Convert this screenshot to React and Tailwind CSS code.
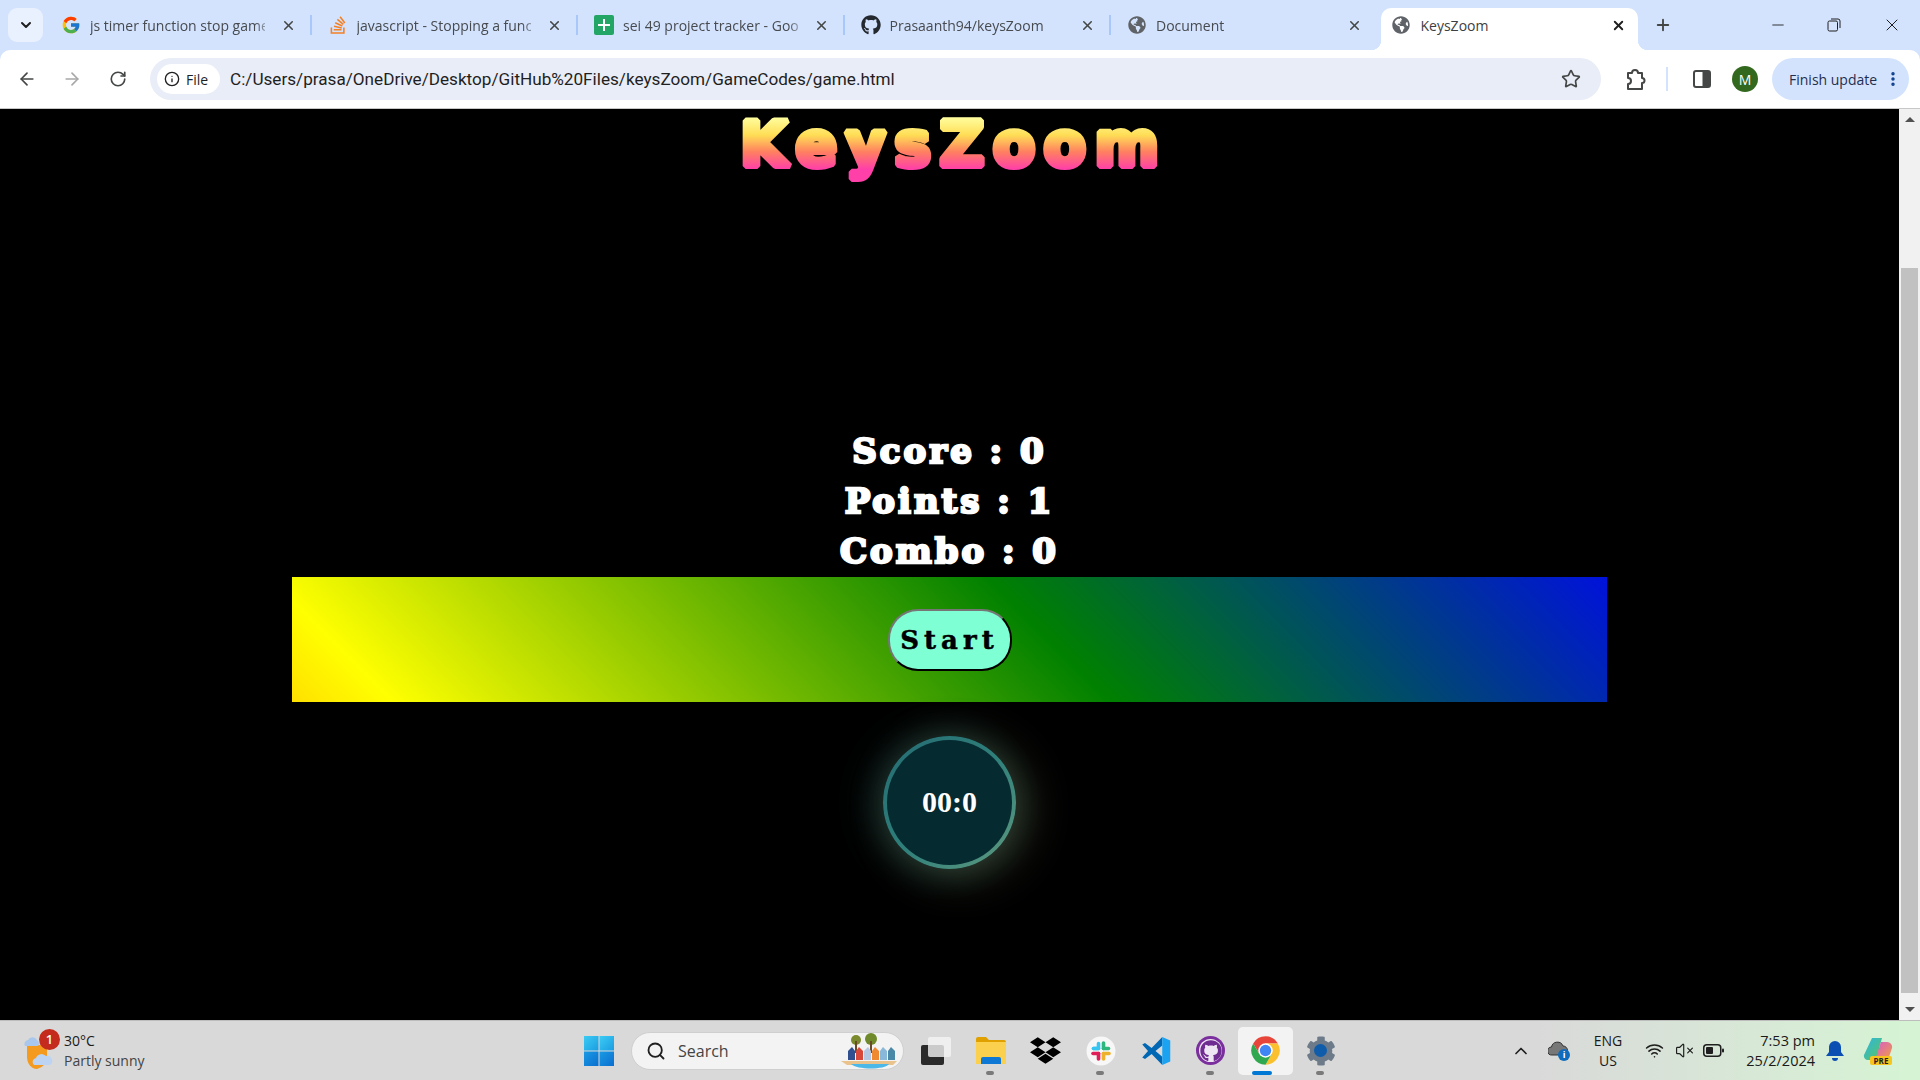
import React from "react";
import { ChevronDown, ChevronUp, X, Plus, Minus, ArrowLeft, ArrowRight, RotateCw, Info, Star, Search, Wifi, VolumeX, MoreVertical } from "lucide-react";
import { FcGoogle } from "react-icons/fc";
import { FaStackOverflow, FaGithub, FaGlobeAmericas, FaDropbox, FaCog } from "react-icons/fa";

const uiFont = "font-['Open_Sans','Noto_Sans',sans-serif]";

const SheetsIcon = () => (
  <div className="w-[20px] h-[20px] rounded-[2px] bg-[#23a566] flex items-center justify-center relative">
    <div className="w-[12px] h-[2px] bg-white" />
    <div className="absolute w-[2px] h-[12px] bg-white" />
  </div>
);

const tabs = [
  { title: "js timer function stop game when time ends", icon: <FcGoogle size={20} /> },
  { title: "javascript - Stopping a function in JS", icon: <FaStackOverflow size={20} className="text-[#f48024]" /> },
  { title: "sei 49 project tracker - Google Sheets", icon: <SheetsIcon /> },
  { title: "Prasaanth94/keysZoom", icon: <FaGithub size={20} className="text-[#24292f]" /> },
  { title: "Document", icon: <FaGlobeAmericas size={18} className="text-[#5f6368]" /> },
];

function Tab({ title, icon, last }) {
  return (
    <div className="w-[266.5px] h-[50px] pb-[8px] flex items-end shrink-0">
      <div className="w-full h-[34px] flex items-center pl-[16px] pr-[16px] relative">
        <div className="w-[20px] flex justify-center shrink-0">{icon}</div>
        <div className="ml-[9px] w-[183px] overflow-hidden whitespace-nowrap text-[14px] text-[#474a4f] [mask-image:linear-gradient(to_right,black_165px,transparent_183px)]">
          {title}
        </div>
        <X size={15} strokeWidth={2.5} className="ml-[16px] text-[#444746] shrink-0" />
        {!last && <div className="absolute right-0 top-[7px] w-[2px] h-[20px] bg-[#a8c7fa]" />}
      </div>
    </div>
  );
}

const RestoreIcon = () => (
  <svg width="14" height="14" viewBox="0 0 14 14" fill="none" stroke="#1f1f1f" strokeWidth="1">
    <rect x="1" y="3" width="9.5" height="10" rx="1.5" />
    <path d="M4 1h7a2 2 0 0 1 2 2v7" />
  </svg>
);

const ExtensionIcon = () => (
  <svg width="22" height="24" viewBox="0 0 22 24" fill="none" stroke="#444746" strokeWidth="2" strokeLinejoin="round">
    <path d="M4 6h4a3 3 0 0 1 6 0h4v5a2.5 2.5 0 0 1 0 5v6H4v-5a3 3 0 0 0 0-6z" />
  </svg>
);

const SidePanelIcon = () => (
  <svg width="18" height="18" viewBox="0 0 18 18">
    <rect x="1" y="1" width="16" height="16" rx="2" fill="none" stroke="#444746" strokeWidth="2" />
    <rect x="9.5" y="1" width="7.5" height="16" fill="#444746" />
  </svg>
);

const WeatherIcon = () => (
  <svg width="34" height="40" viewBox="0 0 34 40">
    <path d="M4 14h20v12a12 12 0 0 1-10 12C8 38 4 32 4 26z" fill="#f39a1f" />
    <path d="M2 15a4 4 0 0 1 3-6 5 5 0 0 1 9 0 4 4 0 0 1 1 6z" fill="#a9c6ec" />
    <path d="M11 34a4 4 0 0 1 2-7 6 6 0 0 1 10-2 5 5 0 0 1 4 9z" fill="#bcd4f2" />
  </svg>
);

const WindowsLogo = () => (
  <svg width="30" height="30" viewBox="0 0 30 30">
    <defs>
      <linearGradient id="winTop" x1="0" y1="0" x2="1" y2="1">
        <stop offset="0" stopColor="#3ccbf4" />
        <stop offset="1" stopColor="#1b9de2" />
      </linearGradient>
      <linearGradient id="winBottom" x1="0" y1="0" x2="1" y2="1">
        <stop offset="0" stopColor="#1a9ae3" />
        <stop offset="1" stopColor="#0a6fd0" />
      </linearGradient>
    </defs>
    <rect x="0" y="0" width="14.5" height="14.5" fill="url(#winTop)" />
    <rect x="15.5" y="0" width="14.5" height="14.5" fill="url(#winTop)" />
    <rect x="0" y="15.5" width="14.5" height="14.5" fill="url(#winBottom)" />
    <rect x="15.5" y="15.5" width="14.5" height="14.5" fill="url(#winBottom)" />
  </svg>
);

const BeachArt = () => (
  <svg width="60" height="36" viewBox="0 0 58 36">
    <circle cx="15" cy="7" r="5" fill="#7a8a2c" />
    <circle cx="30" cy="6" r="6" fill="#6f8a2a" />
    <rect x="14" y="8" width="2" height="12" fill="#6b4a2a" />
    <rect x="29" y="8" width="2" height="12" fill="#6b4a2a" />
    <path d="M0 28h56l-4 4H6z" fill="#e9c28c" />
    <path d="M10 31h38c-4 6-32 6-38 0z" fill="#4bb8e8" />
    <path d="M7 27v-9l4-4 3 4v9z" fill="#2f4f8f" />
    <path d="M15 27v-9l3-4 4 4v9z" fill="#d8483a" />
    <path d="M23 27v-9l4-4 3 4v9z" fill="#b4c8e4" />
    <path d="M31 27v-9l3-4 4 4v9z" fill="#f08a30" />
    <path d="M39 27v-9l3-4 4 4v9z" fill="#8ab8d8" />
    <path d="M47 27v-9l3-4 4 4v9z" fill="#4a88a8" />
  </svg>
);

const TaskViewIcon = () => (
  <div className="w-[30px] h-[28px] relative">
    <div className="absolute left-0 bottom-0 w-[23px] h-[20px] rounded-[2px] bg-[#2a2a2a]" />
    <div className="absolute right-0 top-0 w-[23px] h-[20px] rounded-[2px] bg-[#f4f4f4]/80" />
  </div>
);

const FolderIcon = () => (
  <svg width="30" height="27" viewBox="0 0 30 27">
    <path d="M0 2a2 2 0 0 1 2-2h8l3 3h15a2 2 0 0 1 2 2v4H0z" fill="#e0a100" />
    <path d="M0 5h30v22H0z" fill="#fcd04f" />
    <path d="M5 27v-5a2 2 0 0 1 2-2h16a2 2 0 0 1 2 2v5z" fill="#0f78d4" />
  </svg>
);

const SlackIcon = () => (
  <svg width="30" height="30" viewBox="0 0 30 30">
    <circle cx="15" cy="15" r="14.5" fill="#f7f7f7" />
    <g strokeWidth="3.6" strokeLinecap="round">
      <path d="M12.5 7.5v5h-5" fill="none" stroke="#36c5f0" strokeLinejoin="round" />
      <path d="M7.5 12.5h5" stroke="#36c5f0" />
      <path d="M17.5 7v5.5" stroke="#2eb67d" />
      <path d="M17.5 12.5h5" stroke="#2eb67d" />
      <path d="M12.5 17.5V23" stroke="#e01e5a" />
      <path d="M7 17.5h5.5" stroke="#e01e5a" />
      <path d="M17.5 17.5h5.5" stroke="#ecb22e" />
      <path d="M17.5 17.5V23" stroke="#ecb22e" />
    </g>
  </svg>
);

const VsCodeIcon = () => (
  <svg width="30" height="30" viewBox="0 0 24 24">
    <path d="M17 .8 8.5 9.6 3.2 5.6 1 6.8 5.6 12 1 17.2l2.2 1.2 5.3-4 8.5 8.8V16.5L11.6 12 17 7.5z" fill="#0067b5" />
    <path d="M17 .8 23.4 3.6V20.4L17 23.2z" fill="#1ba3f2" />
  </svg>
);

const GithubDesktopIcon = () => (
  <div className="w-[29px] h-[29px] rounded-full bg-[#7b2f9e] flex items-center justify-center">
    <div className="w-[23px] h-[23px] rounded-full bg-[#efe6f3] flex items-center justify-center">
      <FaGithub size={22} className="text-[#6f2c91]" />
    </div>
  </div>
);

const ChromeIcon = () => (
  <svg width="31" height="31" viewBox="0 0 24 24">
    <path d="M2.47 6.5A11 11 0 0 1 21.53 6.5H12L7.24 14.75Z" fill="#e8453a" />
    <path d="M21.53 6.5A11 11 0 0 1 12 23L16.76 14.75 12 6.5Z" fill="#fbc02d" />
    <path d="M12 23A11 11 0 0 1 2.47 6.5L7.24 14.75H16.76Z" fill="#2fa84f" />
    <circle cx="12" cy="12" r="5.6" fill="#fff" />
    <circle cx="12" cy="12" r="4.4" fill="#3f86f4" />
  </svg>
);

const SettingsIcon = () => (
  <div className="relative w-[30px] h-[30px] flex items-center justify-center">
    <FaCog size={30} className="text-[#6c7a89]" />
    <div className="absolute w-[13px] h-[13px] rounded-full bg-[#0f5cab]" />
  </div>
);

const CloudInfoIcon = () => (
  <div className="relative w-[22px] h-[20px]">
    <svg width="20" height="15" viewBox="0 0 20 15">
      <path d="M4 14a4 4 0 0 1-.5-8A6 6 0 0 1 15 5a4.5 4.5 0 0 1 0 9z" fill="#777" stroke="#333" strokeWidth="1" />
    </svg>
    <div className="absolute right-0 bottom-0 w-[12px] h-[12px] rounded-full bg-[#0f6cbd] text-white text-[9px] leading-[12px] text-center font-bold">i</div>
  </div>
);

const BatteryIcon = () => (
  <svg width="21" height="13" viewBox="0 0 21 13">
    <rect x="0.75" y="0.75" width="17" height="11.5" rx="3" fill="none" stroke="#1f1f1f" strokeWidth="1.5" />
    <rect x="3" y="3" width="7" height="7" rx="1" fill="#1f1f1f" />
    <rect x="19" y="4.5" width="2" height="4" rx="1" fill="#1f1f1f" />
  </svg>
);

const BellIcon = () => (
  <svg width="18" height="22" viewBox="0 0 18 22">
    <path d="M9 1a6 6 0 0 1 6 6v5l3 4H0l3-4V7a6 6 0 0 1 6-6z" fill="#0b4fb3" />
    <path d="M6 18h6a3 3 0 0 1-6 0z" fill="#0b4fb3" />
  </svg>
);

const CopilotIcon = () => (
  <div className="relative w-[30px] h-[28px]">
    <svg width="30" height="24" viewBox="0 0 30 24">
      <defs>
        <linearGradient id="copA" x1="0" y1="0" x2="1" y2="1">
          <stop offset="0" stopColor="#2bb5e8" />
          <stop offset="1" stopColor="#5bc65b" />
        </linearGradient>
        <linearGradient id="copB" x1="0" y1="0" x2="1" y2="1">
          <stop offset="0" stopColor="#d65bd0" />
          <stop offset="1" stopColor="#f2a03a" />
        </linearGradient>
      </defs>
      <path d="M9 1h10l-6 22H5a4 4 0 0 1-4-5z" fill="url(#copA)" />
      <path d="M18 5h6a5 5 0 0 1 5 6l-3 9a4 4 0 0 1-4 3H12z" fill="url(#copB)" />
    </svg>
    <div className="absolute left-[7px] bottom-0 w-[22px] h-[9px] rounded-[2px] bg-[#f7c51e] text-[8px] leading-[9px] text-center font-bold text-[#222]">PRE</div>
  </div>
);

const pinned = [
  { icon: <TaskViewIcon /> },
  { icon: <FolderIcon />, dot: true },
  { icon: <FaDropbox size={31} className="text-black" /> },
  { icon: <SlackIcon />, dot: true },
  { icon: <VsCodeIcon /> },
  { icon: <GithubDesktopIcon />, dot: true },
  { icon: <ChromeIcon />, active: true },
  { icon: <SettingsIcon />, dot: true },
];

function GameTitle() {
  return (
    <h1 className="h-[84px]">
      <svg width="430" height="84" viewBox="0 0 430 84">
        <defs>
          <linearGradient id="titleFill" gradientUnits="userSpaceOnUse" x1="0" y1="8" x2="0" y2="60">
            <stop offset="0" stopColor="#ffffa0" />
            <stop offset="0.35" stopColor="#ffdd55" />
            <stop offset="0.67" stopColor="#ff8060" />
            <stop offset="1" stopColor="#ff40a8" />
          </linearGradient>
        </defs>
        <text
          x="5"
          y="57"
          textLength="419"
          fontSize="62"
          fontWeight="700"
          fontFamily="'DejaVu Sans', sans-serif"
          fill="url(#titleFill)"
          stroke="url(#titleFill)"
          strokeWidth="6"
          strokeLinejoin="bevel"
        >
          KeysZoom
        </text>
      </svg>
    </h1>
  );
}

function Scrollbar() {
  return (
    <div className="w-[21px] bg-[#f1f1f1] flex flex-col items-center shrink-0">
      <div className="mt-[8px] w-0 h-0 border-x-[5px] border-x-transparent border-b-[5px] border-b-[#505050]" />
      <div className="mt-[146px] w-[17px] h-[725px] bg-[#c1c1c1]" />
      <div className="mt-[14px] w-0 h-0 border-x-[5px] border-x-transparent border-t-[5px] border-t-[#505050]" />
    </div>
  );
}

function App() {
  return (
    <div className={`w-[1920px] h-[1080px] overflow-hidden flex flex-col bg-[#d3e3fd] ${uiFont}`}>
      {/* tab strip */}
      <div className="h-[50px] flex items-end shrink-0">
        <div className="w-[35px] h-[34px] ml-[8px] mb-[8px] rounded-[9px] bg-[#e9f0fe] flex items-center justify-center shrink-0">
          <ChevronDown size={16} strokeWidth={3} className="text-[#1f1f1f]" />
        </div>
        <div className="flex ml-[2px]">
          {tabs.map((tab, i) => (
            <Tab key={i} title={tab.title} icon={tab.icon} last={i === tabs.length - 1} />
          ))}
        </div>
        <div className="relative w-[257px] h-[42px] ml-[3px] rounded-t-[10px] bg-white flex items-center pb-[8px] pl-[11px] pr-[12px] shrink-0">
          <FaGlobeAmericas size={18} className="text-[#5f6368] shrink-0" />
          <span className="ml-[11px] text-[14px] text-[#3c4043]">KeysZoom</span>
          <X size={15} strokeWidth={3} className="ml-auto text-[#1f1f1f]" />
          <div className="absolute -left-[10px] bottom-0 w-[10px] h-[10px] bg-[radial-gradient(circle_at_top_left,#d3e3fd_10px,white_10.5px)]" />
          <div className="absolute -right-[10px] bottom-0 w-[10px] h-[10px] bg-[radial-gradient(circle_at_top_right,#d3e3fd_10px,white_10.5px)]" />
        </div>
        <div className="h-[50px] flex items-center ml-[16px]">
          <Plus size={18} strokeWidth={2.5} className="text-[#444746]" />
        </div>
        <div className="ml-auto h-[50px] flex items-center">
          <Minus size={18} strokeWidth={1.2} className="text-[#1f1f1f]" />
          <div className="ml-[40px]"><RestoreIcon /></div>
          <X size={20} strokeWidth={1.2} className="ml-[41px] mr-[18px] text-[#1f1f1f]" />
        </div>
      </div>

      {/* toolbar */}
      <div className="h-[59px] bg-white border-b border-[#c7c7c7] flex items-center shrink-0 rounded-t-[10px]">
        <ArrowLeft size={20} strokeWidth={2} className="ml-[17px] text-[#444746]" />
        <ArrowRight size={20} strokeWidth={2} className="ml-[25px] text-[#a8a8a8]" />
        <RotateCw size={18} strokeWidth={2.2} className="ml-[27px] text-[#444746]" />
        <div className="ml-[23px] w-[1451px] h-[42px] rounded-full bg-[#e9edf7] flex items-center pl-[7px] pr-[20px]">
          <div className="w-[63px] h-[30px] rounded-full bg-white flex items-center pl-[7px]">
            <Info size={16} strokeWidth={2} className="text-[#1f1f1f]" />
            <span className="ml-[6px] text-[14px] font-medium text-[#1f1f1f]">File</span>
          </div>
          <span className="ml-[10px] pt-[2px] text-[17.15px] font-['Roboto',sans-serif] text-[#1f1f1f] whitespace-nowrap">C:/Users/prasa/OneDrive/Desktop/GitHub%20Files/keysZoom/GameCodes/game.html</span>
          <Star size={20} strokeWidth={2} className="ml-auto text-[#444746]" />
        </div>
        <div className="ml-[23px]"><ExtensionIcon /></div>
        <div className="ml-[20px] w-[2px] h-[24px] bg-[#d3e3fd]" />
        <div className="ml-[25px]"><SidePanelIcon /></div>
        <div className="ml-[21px] w-[26px] h-[26px] rounded-full bg-[#33691e] text-white text-[14px] flex items-center justify-center">M</div>
        <div className="ml-[14px] w-[137px] h-[42px] rounded-full bg-[#d3e3fd] flex items-center pl-[17px]">
          <span className="text-[14px] text-[#1f2f4f] whitespace-nowrap">Finish update</span>
          <MoreVertical size={18} strokeWidth={2.6} className="ml-[7px] text-[#0b3d8c]" />
        </div>
      </div>

      {/* page */}
      <div className="h-[911px] flex shrink-0 bg-black">
        <div className="flex-1 flex flex-col items-center">
          <GameTitle />
          <div className="mt-[233px] flex flex-col items-center text-white text-[34px] font-bold tracking-[3px] font-['DejaVu_Serif',serif] [-webkit-text-stroke:2.5px_white]">
            <div className="h-[50px] leading-[50px]">Score : 0</div>
            <div className="h-[50px] leading-[50px]">Points : 1</div>
            <div className="h-[51px] leading-[51px]">Combo : 0</div>
          </div>
          <div className="w-[1315px] h-[125px] flex items-center justify-center bg-[linear-gradient(45deg,#ffe000_0%,yellow_7%,green_57%,blue_107%)]">
            <button className="w-[124px] h-[62px] pt-[2px] rounded-[30px] bg-[#7fffd4] border-2 border-solid border-t-[#767676] border-l-[#767676] border-r-black border-b-black text-black text-[26px] font-bold font-['DejaVu_Serif',serif] tracking-[5px] [-webkit-text-stroke:0.5px_black]">
              Start
            </button>
          </div>
          <div className="mt-[34px] w-[133px] h-[133px] rounded-full p-[4px] bg-[linear-gradient(135deg,#256b72,#2f7f7a_50%,#5f9a80)] shadow-[10px_6px_45px_rgba(160,180,130,0.32),-8px_0_40px_rgba(60,150,150,0.28)]">
            <div className="w-full h-full pb-[2px] rounded-full bg-[#052a30] flex items-center justify-center text-white text-[30px] font-bold font-['Liberation_Serif',serif]">
              00:0
            </div>
          </div>
        </div>
        <Scrollbar />
      </div>

      {/* taskbar */}
      <div className="h-[60px] border-t border-[#bdbdbd] bg-[linear-gradient(to_right,#d9d9d9_80%,#d6f4d4_100%)] flex items-center shrink-0">
        <div className="relative ml-[23px] w-[34px] flex justify-center">
          <WeatherIcon />
          <div className="absolute left-[16px] -top-[2px] w-[21px] h-[21px] rounded-full bg-[#c42b1c] text-white text-[13px] leading-[21px] text-center font-semibold">1</div>
        </div>
        <div className="ml-[7px] w-[110px] text-[14px] leading-[20px] whitespace-nowrap">
          <div className="text-[#1a1a1a]">30°C</div>
          <div className="text-[#444]">Partly sunny</div>
        </div>
        <div className="ml-[410px]"><WindowsLogo /></div>
        <div className="ml-[17px] w-[273px] h-[38px] rounded-full bg-[#f3f3f3] border border-[#cfcfcf] flex items-center pl-[14px] pr-[3px]">
          <Search size={20} strokeWidth={2.2} className="text-[#1f1f1f]" />
          <span className="ml-[12px] text-[16px] text-[#444]">Search</span>
          <div className="ml-auto"><BeachArt /></div>
        </div>
        <div className="ml-[4px] flex">
          {pinned.map((item, i) => (
            <div key={i} className={`relative w-[55px] h-[48px] flex items-center justify-center rounded-[5px] ${item.active ? "bg-[#f3f3f3]" : ""}`}>
              {item.icon}
              {item.dot && <div className="absolute bottom-0 left-[23px] w-[8px] h-[4px] rounded-full bg-[#7a7a7a]" />}
              {item.active && <div className="absolute bottom-0 left-[14px] w-[20px] h-[4px] rounded-full bg-[#0078d4]" />}
            </div>
          ))}
        </div>
        <ChevronUp size={20} strokeWidth={2} className="ml-[163px] text-[#1f1f1f]" />
        <div className="ml-[17px]"><CloudInfoIcon /></div>
        <div className="ml-[18px] w-[40px] text-center text-[14px] leading-[20px] text-[#1a1a1a]">
          <div>ENG</div>
          <div>US</div>
        </div>
        <Wifi size={19} strokeWidth={2} className="ml-[17px] text-[#1f1f1f]" />
        <VolumeX size={19} strokeWidth={1.5} className="ml-[11px] text-[#1f1f1f]" />
        <div className="ml-[9px]"><BatteryIcon /></div>
        <div className="ml-[7px] w-[84px] text-right text-[14.5px] leading-[20px] text-[#1a1a1a] whitespace-nowrap">
          <div>7:53 pm</div>
          <div>25/2/2024</div>
        </div>
        <div className="ml-[11px]"><BellIcon /></div>
        <div className="ml-[19px]"><CopilotIcon /></div>
      </div>
    </div>
  );
}

export default App;
